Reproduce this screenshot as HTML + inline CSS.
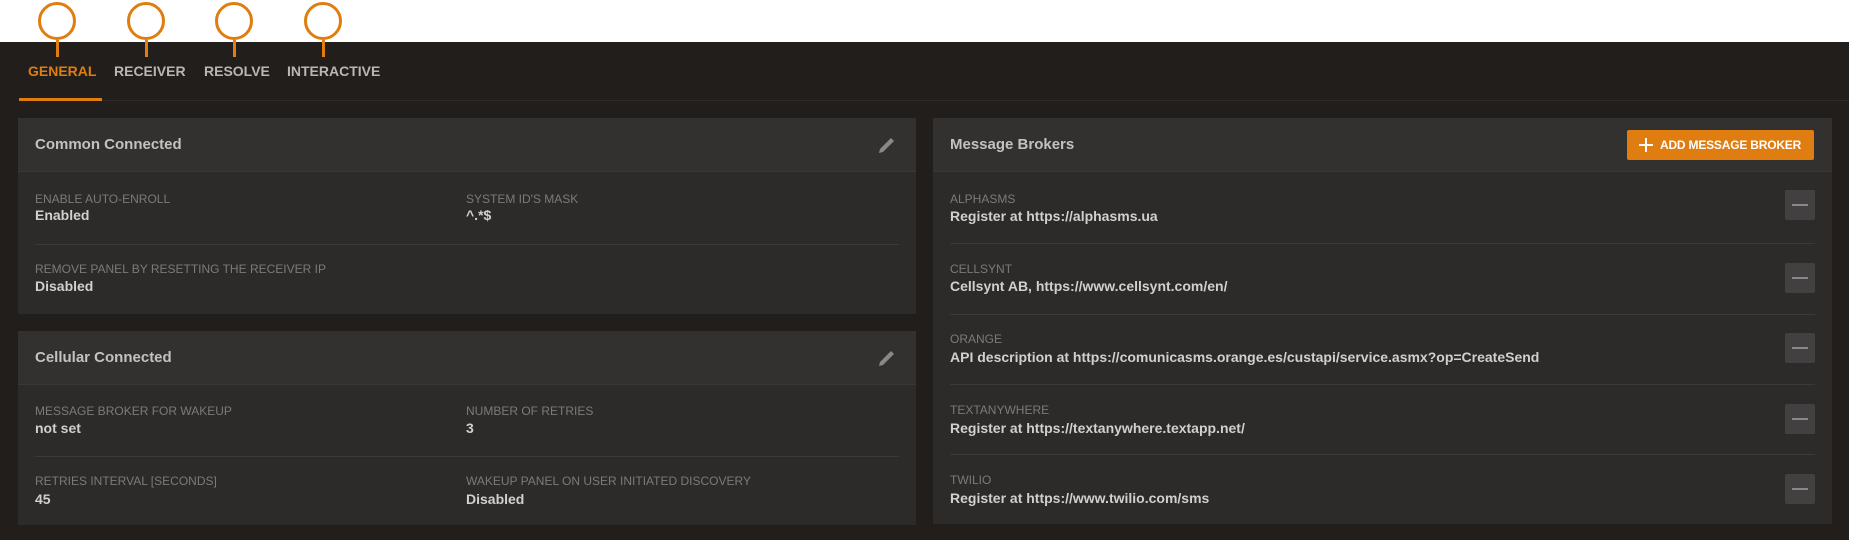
<!DOCTYPE html>
<html><head><meta charset="utf-8"><style>
*{margin:0;padding:0;box-sizing:border-box}
body{width:1849px;height:540px;background:#211e1c;position:relative;overflow:hidden;font-family:"Liberation Sans",sans-serif}
.top{position:absolute;left:0;top:0;width:1849px;height:42px;background:#fff}
.circ{position:absolute;top:2px;width:38px;height:38px;border:3px solid #e07d10;border-radius:50%}
.stem{position:absolute;top:40px;width:3px;height:17px;background:#e07d10}
.tab{position:absolute;top:63px;font-size:14px;font-weight:bold;color:#b9b6b3}
.card{position:absolute;background:#2c2b2a}
.hdr{position:absolute;left:0;right:0;top:0;height:54px;background:#333130;border-bottom:1px solid #3a3836}
.title{position:absolute;left:17px;top:18px;font-size:15px;font-weight:bold;color:#c4c1be}
.lbl{position:absolute;font-size:12px;color:#7d7a77}
.val{position:absolute;font-size:14px;font-weight:bold;color:#d2cfcc}
.div{position:absolute;height:1px;background:#3c3a38}
.minus{position:absolute;left:852px;width:30px;height:30px;background:#424040;border-radius:2px}
.minus:after{content:"";position:absolute;left:7px;top:14px;width:16px;height:2px;background:#8a8886}
</style></head><body>
<div class="top"></div>
<div class="circ" style="left:38px"></div><div class="stem" style="left:56px"></div>
<div class="circ" style="left:127px"></div><div class="stem" style="left:145px"></div>
<div class="circ" style="left:215px"></div><div class="stem" style="left:233px"></div>
<div class="circ" style="left:304px"></div><div class="stem" style="left:322px"></div>
<div class="tab" style="left:28px;color:#e07d10">GENERAL</div>
<div class="tab" style="left:114px">RECEIVER</div>
<div class="tab" style="left:204px">RESOLVE</div>
<div class="tab" style="left:287px">INTERACTIVE</div>
<div style="position:absolute;left:19px;top:100px;width:1830px;height:1px;background:#2e2b29"></div>
<div style="position:absolute;left:19px;top:98px;width:83px;height:3px;background:#e07d10"></div>

<div class="card" style="left:18px;top:118px;width:898px;height:196px">
 <div class="hdr"><div class="title">Common Connected</div>
 <svg style="position:absolute;left:859px;top:17px" width="20" height="20" viewBox="0 0 20 20"><path d="M2 18 L3 14 L14 3 L17 6 L6 17 Z" fill="#8a8886"/></svg></div>
 <div class="lbl" style="left:17px;top:74px">ENABLE AUTO-ENROLL</div>
 <div class="val" style="left:17px;top:89px">Enabled</div>
 <div class="lbl" style="left:448px;top:74px">SYSTEM ID'S MASK</div>
 <div class="val" style="left:448px;top:89px">^.*$</div>
 <div class="div" style="left:17px;top:126px;width:864px"></div>
 <div class="lbl" style="left:17px;top:144px">REMOVE PANEL BY RESETTING THE RECEIVER IP</div>
 <div class="val" style="left:17px;top:160px">Disabled</div>
</div>

<div class="card" style="left:18px;top:331px;width:898px;height:194px">
 <div class="hdr"><div class="title">Cellular Connected</div>
 <svg style="position:absolute;left:859px;top:17px" width="20" height="20" viewBox="0 0 20 20"><path d="M2 18 L3 14 L14 3 L17 6 L6 17 Z" fill="#8a8886"/></svg></div>
 <div class="lbl" style="left:17px;top:73px">MESSAGE BROKER FOR WAKEUP</div>
 <div class="val" style="left:17px;top:89px">not set</div>
 <div class="lbl" style="left:448px;top:73px">NUMBER OF RETRIES</div>
 <div class="val" style="left:448px;top:89px">3</div>
 <div class="div" style="left:17px;top:125px;width:864px"></div>
 <div class="lbl" style="left:17px;top:143px">RETRIES INTERVAL [SECONDS]</div>
 <div class="val" style="left:17px;top:160px">45</div>
 <div class="lbl" style="left:448px;top:143px">WAKEUP PANEL ON USER INITIATED DISCOVERY</div>
 <div class="val" style="left:448px;top:160px">Disabled</div>
</div>

<div class="card" style="left:933px;top:118px;width:899px;height:406px">
 <div class="hdr"><div class="title">Message Brokers</div>
 <div style="position:absolute;left:694px;top:12px;width:187px;height:30px;background:#e07d10;border-radius:2px;color:#fff;font-size:12px;font-weight:bold;line-height:30px;padding-left:33px;white-space:nowrap;letter-spacing:-0.2px;overflow:hidden">ADD MESSAGE BROKER
 <div style="position:absolute;left:12px;top:14px;width:14px;height:2px;background:#fff"></div>
 <div style="position:absolute;left:18px;top:8px;width:2px;height:14px;background:#fff"></div></div></div>
 <div class="lbl" style="left:17px;top:74px">ALPHASMS</div>
 <div class="val" style="left:17px;top:90px">Register at https://alphasms.ua</div>
 <div class="minus" style="top:72px"></div>
 <div class="div" style="left:17px;top:125px;width:865px"></div>
 <div class="lbl" style="left:17px;top:144px">CELLSYNT</div>
 <div class="val" style="left:17px;top:160px">Cellsynt AB, https://www.cellsynt.com/en/</div>
 <div class="minus" style="top:145px"></div>
 <div class="div" style="left:17px;top:196px;width:865px"></div>
 <div class="lbl" style="left:17px;top:214px">ORANGE</div>
 <div class="val" style="left:17px;top:231px">API description at https://comunicasms.orange.es/custapi/service.asmx?op=CreateSend</div>
 <div class="minus" style="top:215px"></div>
 <div class="div" style="left:17px;top:266px;width:865px"></div>
 <div class="lbl" style="left:17px;top:285px">TEXTANYWHERE</div>
 <div class="val" style="left:17px;top:302px">Register at https://textanywhere.textapp.net/</div>
 <div class="minus" style="top:286px"></div>
 <div class="div" style="left:17px;top:336px;width:865px"></div>
 <div class="lbl" style="left:17px;top:355px">TWILIO</div>
 <div class="val" style="left:17px;top:372px">Register at https://www.twilio.com/sms</div>
 <div class="minus" style="top:356px"></div>
</div>
</body></html>
